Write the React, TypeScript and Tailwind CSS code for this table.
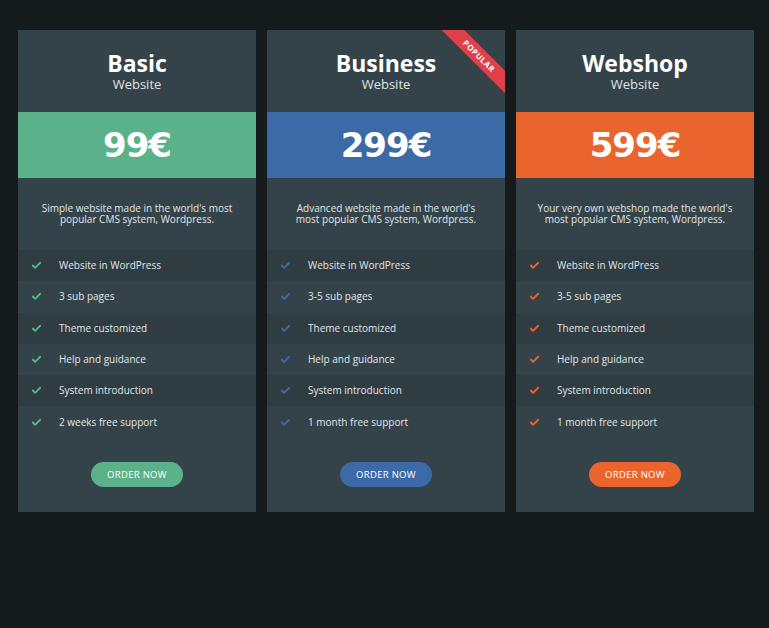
import { Check } from 'lucide-react';

type Plan = {
    name: string;
    price: string;
    description: string;
    features: string[];
    accent: string;
    check: string;
    popular?: boolean;
};

const plans: Plan[] = [
    {
        name: 'Basic',
        price: '99€',
        description: "Simple website made in the world's most popular CMS system, Wordpress.",
        features: ['Website in WordPress', '3 sub pages', 'Theme customized', 'Help and guidance', 'System introduction', '2 weeks free support'],
        accent: 'bg-[#5bb28a]',
        check: 'text-[#5bb28a]',
    },
    {
        name: 'Business',
        price: '299€',
        description: "Advanced website made in the world's most popular CMS system, Wordpress.",
        features: ['Website in WordPress', '3-5 sub pages', 'Theme customized', 'Help and guidance', 'System introduction', '1 month free support'],
        accent: 'bg-[#3b6aa7]',
        check: 'text-[#3b6aa7]',
        popular: true,
    },
    {
        name: 'Webshop',
        price: '599€',
        description: 'Your very own webshop made the world\'s most popular CMS system, Wordpress.',
        features: ['Website in WordPress', '3-5 sub pages', 'Theme customized', 'Help and guidance', 'System introduction', '1 month free support'],
        accent: 'bg-[#e9652d]',
        check: 'text-[#e9652d]',
    },
];

const PricingCard = ({ plan }: { plan: Plan }) => {
    return (
        <div className="relative w-[238px] bg-[#344349] overflow-hidden">
            {plan.popular && (
                <div className="absolute left-[162px] top-[18px] w-[100px] h-[16px] rotate-45 bg-[#e0404a] flex items-center justify-center">
                    <span className="text-[8px] font-bold text-white tracking-[0.5px]">POPULAR</span>
                </div>
            )}

            {/* Title */}
            <div className="h-[82px] flex flex-col items-center pt-[21px]">
                <h2 className="text-[23px] leading-[24px] font-bold text-white">{plan.name}</h2>
                <p className="mt-[1px] text-[13px] leading-[16px] text-[#dfe4e6]">Website</p>
            </div>

            {/* Price */}
            <div className={`h-[66px] flex items-center justify-center ${plan.accent}`}>
                <span className="font-['DejaVu_Sans',sans-serif] text-[34px] font-bold text-white tracking-[-1px]">{plan.price}</span>
            </div>

            {/* Description */}
            <div className="h-[72px] flex items-center justify-center px-[20px]">
                <p className="text-[10px] leading-[11px] text-center text-[#e2e6e8]">{plan.description}</p>
            </div>

            {/* Features */}
            <ul>
                {plan.features.map((feature, i) => (
                    <li
                        key={feature}
                        className={`h-[31.3px] flex items-center pl-[13px] ${i % 2 === 0 ? 'bg-[#2f3c42]' : 'bg-[#344349]'}`}
                    >
                        <Check className={`w-[11px] h-[11px] ${plan.check}`} strokeWidth={4} />
                        <span className="ml-[17px] text-[10px] text-[#e2e6e8]">{feature}</span>
                    </li>
                ))}
            </ul>

            {/* Button */}
            <div className="h-[74px] flex items-center justify-center">
                <button className={`w-[92px] h-[25px] rounded-full text-[9.5px] font-medium tracking-[0.3px] text-white ${plan.accent}`}>
                    ORDER NOW
                </button>
            </div>
        </div>
    );
};

const App = () => {
    return (
        <div className="min-h-[628px] w-full bg-[#151b1d] pt-[30px] pl-[18px] font-['Open_Sans',sans-serif]">
            <div className="flex gap-[11px] items-start">
                {plans.map((plan) => (
                    <PricingCard key={plan.name} plan={plan} />
                ))}
            </div>
        </div>
    );
};

export default App;
